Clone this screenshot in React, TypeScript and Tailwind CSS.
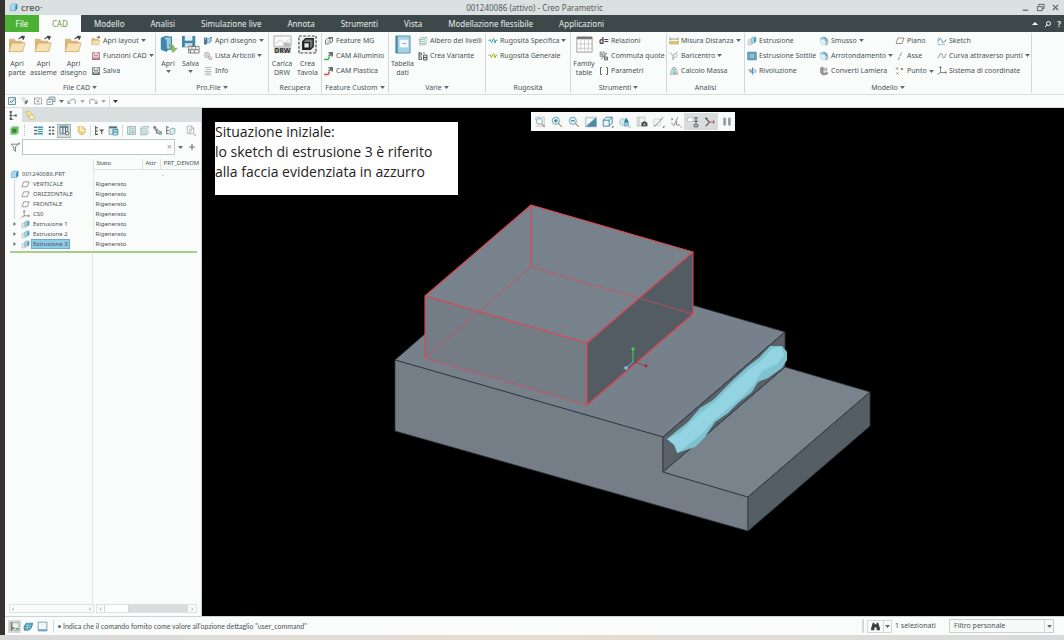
import type { ReactNode } from "react";
import clsx from "clsx";

type Item = { icon: string; label: string; menu?: boolean };
type Big = { icon: string; lines: string[]; menu?: boolean; width: string };
type Column = { width: string; items: Item[] };
type Group = {
  title: string;
  menu?: boolean;
  width: string;
  big?: Big[];
  columns?: Column[];
};

const folder = (
  <>
    <path d="M1 5V17.500H15L17 8H15V6H8L6.500 4H1Z" fill="#d9b77c" />
    <path d="M4 8.500H18L15.500 17.500H1Z" fill="#f6dfb0" stroke="#c9a566" strokeWidth=".7" />
    <path d="M11 4.500C12 2.500 13 2 15 2.500M14 1L17.500 1.500L16 5Z" fill="#333" stroke="#333" strokeWidth=".6" />
  </>
);

const disk = (color: string) => (
  <>
    <path d="M3 3H17V17H3Z" fill="#f4f6f7" stroke={color} strokeWidth="1.500" />
    <path d="M6 3V9H14V3M5 17V12H15V17" fill="#dfe3e5" stroke={color} strokeWidth="1.300" />
    <path d="M3 15H17V18H3Z" fill={color} />
  </>
);

const round = (
  <>
    <path d="M3 4L9 2C15 2 18 6 18 11V16L13 18V12C13 8 10 6 3 6Z" fill="#a9cbd8" stroke="#7aa7b8" />
    <path d="M3 6C10 6 13 8 13 12V18H7L3 14Z" fill="#e4f0f4" stroke="#a6bfc9" />
    <path d="M9 3C14 4 15 7 15 10" stroke="#3298c3" strokeWidth="2" fill="none" />
  </>
);

const icons: Record<string, ReactNode> = {
  folder,
  disk: disk("#59666e"),
  diskRed: disk("#b0606a"),
  openBlue: (
    <>
      <path d="M2 3L9 1V17L2 15Z" fill="#2f7396" />
      <path d="M5 2H13V15H8Z" fill="#9fcbe0" stroke="#2f6f92" />
      <path d="M2 3L8 5V18L2 15.500Z" fill="#3f87ac" />
      <path d="M11 10C14 9 16 11 16 14H19L15 18.500L11.500 14H14C14 12 13 11.500 11 12Z" fill="#8fc267" stroke="#5c8f3c" strokeWidth=".5" />
    </>
  ),
  saveBlue: (
    <>
      <path d="M1 1H15V13H1Z" fill="#4685a6" />
      <path d="M4 1H12V6H4Z" fill="#e9f3f7" />
      <path d="M4 8.500H12V13H4Z" fill="#c7dbe4" />
      <path d="M8 12H19V19H8ZM8 15.500H19M11.500 12V15.500M15.500 12V15.500M10 15.500V19M14 15.500V19" fill="#f6f6f6" stroke="#666" strokeWidth=".8" />
    </>
  ),
  book: (
    <>
      <path d="M2 3H8V17H2Z" fill="#4f7b93" />
      <path d="M4 4H6M4 7H6" stroke="#fff" />
      <path d="M9 5H14V14H9Z" fill="#b9dbe9" stroke="#52859d" />
      <path d="M16 2V12M14 4L16 2L18 4" stroke="#2f7396" strokeWidth="1.500" fill="none" />
    </>
  ),
  gearList: (
    <>
      <circle cx="8" cy="8" r="5" fill="#eee" stroke="#aaa" strokeWidth="2" />
      <circle cx="8" cy="8" r="1.500" fill="#999" />
      <path d="M11 12L14 10L17 13L18 17H12Z" fill="#ddd" stroke="#888" />
    </>
  ),
  lines: <path d="M3 3H17M5 7H16M3 11H17M5 14H16M3 17.500H17" stroke="#a6acaf" strokeWidth="1.600" />,
  drw: (
    <>
      <path d="M1 1H19V12H1Z" fill="#fafafa" stroke="#aaa" />
      <path d="M1 10L8 5L12 9L19 3" stroke="#ccc" fill="none" />
      <path d="M11 8H18V12H11Z" fill="#bbb" />
      <path d="M1 12H19V19H1Z" fill="#ccc" />
      <text x="10" y="18.500" fontSize="7" fontWeight="800" textAnchor="middle" fill="#333">DRW</text>
    </>
  ),
  tavola: (
    <>
      <path d="M1 1H19V19H1Z" fill="#eee" stroke="#444" strokeWidth="1.200" strokeDasharray="3 1.500" />
      <path d="M5 7L8 4H16V12L13 15H5Z" fill="#777" stroke="#222" strokeWidth="1.500" />
      <path d="M6 8H12V14H6Z" fill="#e8e8e8" stroke="#222" strokeWidth="1.500" />
    </>
  ),
  feature: (
    <>
      <path d="M3 8L7 5H12V13L9 16H3Z" fill="#fff" stroke="#555" strokeWidth="1.500" />
      <path d="M9 3H17V11L12 14M12 6L17 3M8 9V13" fill="none" stroke="#444" strokeWidth="1.500" />
    </>
  ),
  camGreen: (
    <>
      <path d="M9 2H18V11H15L14 8L12 11H9V7H12V5H9Z" fill="#667073" />
      <path d="M0 17H8L11 12" stroke="#3eb64c" strokeWidth="3" fill="none" />
    </>
  ),
  camRed: (
    <>
      <path d="M9 2H18V11H15L14 8L12 11H9V7H12V5H9Z" fill="#667073" />
      <path d="M0 17H8L11 12" stroke="#d84f5a" strokeWidth="3" fill="none" />
    </>
  ),
  tabella: (
    <>
      <path d="M3 1H18V19H3Z" fill="#a6d1e4" stroke="#6199b2" />
      <path d="M3 1H5V19H3Z" fill="#4b8aa9" />
      <path d="M7 5H16V13H7Z" fill="#f5fbfd" />
      <path d="M10 9H14" stroke="#76a9bf" />
    </>
  ),
  layers: (
    <path d="M2 7L6 3H18L14 7ZM2 11L6 8M2 11H14L18 7M2 15L6 12M2 15H14L18 11M2 18H14L18 14" fill="#e1f0ec" stroke="#7fa59d" strokeWidth="1.200" />
  ),
  variante: (
    <>
      <path d="M2 2V18M2 4H7V8H2M2 12H7V17H2M12 2V5" fill="none" stroke="#333" strokeWidth="1.500" />
      <path d="M11 8H18V18H11ZM11 13H18" fill="#ddd" stroke="#333" strokeWidth="1.500" />
    </>
  ),
  waveBlue: <path d="M1 10L4 7L7 13L11 5L14 14L16 8L19 9" stroke="#3da79d" strokeWidth="2" fill="none" />,
  waveGreen: <path d="M1 10L4 7L7 13L11 5L14 14L16 8L19 9" stroke="#a7b53b" strokeWidth="2" fill="none" />,
  family: (
    <>
      <path d="M2 2H18V18H2Z" fill="#fff" stroke="#999" />
      <path d="M2 2H18V4.500H2Z" fill="#777" />
      <path d="M2 9.500H18M2 14H18M6 5V18M10 5V18M14 5V18" stroke="#ccc" />
    </>
  ),
  deq: <text x="0" y="15" fontSize="16" fontWeight="700" fill="#444">d=</text>,
  quote: (
    <>
      <path d="M2 2H12V11H2Z" fill="#ccc" stroke="#777" />
      <path d="M4 17L16 4M3 5L8 9M11 12H17V18H11Z" stroke="#555" strokeWidth="1.500" fill="#bbb" />
    </>
  ),
  params: <path d="M6 3H3V17H6M14 3H17V17H14" fill="none" stroke="#666" strokeWidth="2" />,
  measure: (
    <>
      <path d="M2 3V9M18 3V9M2 6H18" stroke="#777" strokeWidth="1.500" />
      <path d="M1 11H19V16H1Z" fill="#e7cc62" stroke="#ab9440" />
    </>
  ),
  bari: (
    <>
      <path d="M2 3L8 9V18M8 9L17 2" stroke="#72878d" strokeWidth="1.600" fill="none" />
      <path d="M9 13Q17 13 16 6" stroke="#68a6a3" strokeWidth="1.500" fill="none" />
    </>
  ),
  mass: (
    <>
      <path d="M2 17L5 7H15L18 17Z" fill="#c3dfe2" stroke="#75a4ad" />
      <path d="M6 7L10 2L14 7M10 10V15L16 14" stroke="#65929b" strokeWidth="1.800" fill="none" />
      <path d="M12 12H17V17H12Z" fill="#efb980" />
    </>
  ),
  extrude: (
    <>
      <path d="M2 8L7 6H11V16L7 18H2Z" fill="#dce3e6" stroke="#a1b1b8" />
      <path d="M8 5L12 2H18V11L14 14H8Z" fill="#a8d2e4" stroke="#6d9fb5" />
      <path d="M14 5L18 2V11L14 14Z" fill="#4e9dc0" />
    </>
  ),
  extrudeThin: (
    <>
      <path d="M1 2H19V18H1Z" fill="#6fa7bf" stroke="#4f879f" />
      <path d="M5 5H15V15H5Z" fill="#b5d5e3" stroke="#396f89" />
      <path d="M8 8H12V12H8Z" fill="#e9f4f8" stroke="#396f89" />
    </>
  ),
  revolve: (
    <>
      <ellipse cx="12" cy="10" rx="7" ry="4" fill="#c3dbe5" stroke="#86a9b8" />
      <path d="M11 3V17M3 7L10 12" stroke="#5a8da2" strokeWidth="2" />
    </>
  ),
  round,
  sheet: (
    <>
      <path d="M3 4L8 2V12Q9 15 17 13V16Q8 20 5 16Q3 14 3 11Z" fill="#969da1" stroke="#62696d" />
      <path d="M9 4H16V10H9ZM9 7H16" fill="#e6e6e6" stroke="#888" />
    </>
  ),
  plane: <path d="M6 4H18L14 15H2Z" fill="#fbfaf6" stroke="#857c70" strokeWidth="1.600" />,
  axis: <path d="M6 18L14 2" stroke="#7d7468" strokeWidth="1.600" strokeDasharray="7 1.500" />,
  point: <path d="M2 3L6 7M6 3L2 7M12 4L16 8M16 4L12 8M3 13L7 17M7 13L3 17" stroke="#7d6e60" strokeWidth="1.600" />,
  sketch: (
    <>
      <path d="M2 4H7M2 4V17H16" stroke="#8db9cd" strokeWidth="1.500" fill="none" />
      <path d="M3 10C6 2 9 6 10 10S15 15 18 7" stroke="#3b93b8" strokeWidth="2" fill="none" />
    </>
  ),
  curve: <path d="M1 14C5 14 4 5 8 5S10 15 14 14S15 6 19 6" stroke="#777" strokeWidth="1.600" fill="none" />,
  csys: <path d="M7 2V13L1 17M7 13H18M5 4L7 1L9 4M16 11L19 13L16 15" fill="none" stroke="#6e665a" strokeWidth="1.600" />,
  part: (
    <>
      <path d="M3 6L7 2H18V13L14 17H3Z" fill="#a8d9ef" stroke="#3f94b7" />
      <path d="M14 6L18 2V13L14 17Z" fill="#278ab5" />
    </>
  ),
  check: (
    <>
      <path d="M3 3H17V17H3Z" fill="#e5f1f0" stroke="#53747c" strokeWidth="1.500" />
      <path d="M6 10L9 13L16 5" fill="none" stroke="#34828f" strokeWidth="2" />
    </>
  ),
  brush: (
    <>
      <path d="M3 3L10 5L14 12L7 10Z" fill="#eee" stroke="#aaa" />
      <path d="M10 10L17 8L14 15L9 17Z" fill="#777" />
    </>
  ),
  closeWin: <path d="M3 4H17V16H3ZM7 7L13 13M13 7L7 13" fill="#fff" stroke="#777" strokeWidth="1.600" strokeDasharray="3 1" />,
  windows: (
    <>
      <path d="M6 2H18V11H6Z" fill="#cfe0e4" stroke="#6b858c" strokeWidth="1.500" />
      <path d="M2 7H13V17H2Z" fill="#fff" stroke="#6b858c" strokeWidth="1.500" />
      <path d="M5 12H10" stroke="#3292a7" strokeWidth="2" />
    </>
  ),
  undo: <path d="M1 15H7M2 14V9M3 14Q8 4 14 6Q19 9 16 16" fill="none" stroke="#8f989c" strokeWidth="1.800" />,
  redo: <path d="M19 15H13M18 14V9M17 14Q12 4 6 6Q1 9 4 16" fill="none" stroke="#8f989c" strokeWidth="1.800" />,
  tree: (
    <>
      <path d="M5 3V17M5 10H12M5 17H10" stroke="#777" strokeWidth="1.500" />
      <path d="M3 2H7V6H3ZM3 8H7V12H3ZM3 14H7V18H3ZM12 8H16V12H12Z" fill="#555" />
    </>
  ),
  folders: (
    <>
      <path d="M2 3H9L13 8V12H5Z" fill="#f5e7a5" stroke="#c4a848" />
      <path d="M7 9H13L17 12V17H9Z" fill="#f9efbd" stroke="#c4a848" />
    </>
  ),
  greenCube: (
    <>
      <path d="M3 6L7 3H17V14L13 17H3Z" fill="#66b85e" stroke="#a9d5a5" strokeWidth="2" />
      <path d="M6 7H13V14H6Z" fill="#2e8a35" />
    </>
  ),
  listBlue: (
    <>
      <path d="M2 4H8M2 10H8M2 16H8" stroke="#5a6c74" strokeWidth="2.500" />
      <path d="M9 4H18M9 8H18M9 12H18M9 16H18" stroke="#3c9cae" strokeWidth="2.500" />
    </>
  ),
  listDots: <path d="M5 4H9M5 10H9M5 16H9M11 4H15M11 10H15M11 16H15" stroke="#5a6468" strokeWidth="3" />,
  columnsGear: (
    <>
      <path d="M2 2H16V16H2Z" fill="#e6f1f4" stroke="#456a77" strokeWidth="1.500" />
      <path d="M2 4H16M7 3V16M12 3V16" stroke="#456a77" strokeWidth="2" />
      <circle cx="15" cy="15" r="3" fill="#fff" stroke="#555" strokeWidth="1.500" />
    </>
  ),
  shield: (
    <>
      <path d="M4 3H12L17 7V12Q15 17 10 18Q5 16 4 12Z" fill="#f4d37b" stroke="#c79e3d" />
      <path d="M9 3V10H16" stroke="#fff" strokeWidth="2" fill="none" />
    </>
  ),
  treeFilter: (
    <>
      <path d="M3 2V18M3 5H7M3 11H7M3 17H7" stroke="#555" strokeWidth="2" />
      <path d="M9 8H19L15 12V17L13 16V12Z" fill="#555" />
    </>
  ),
  columns: (
    <>
      <path d="M2 3H16V17H2Z" fill="#dcebf0" stroke="#53717c" />
      <path d="M2 3H16V6H2Z" fill="#53717c" />
      <path d="M9 8H18V18H9ZM9 11H18M9 14H18" fill="#f6fafc" stroke="#2c83a0" strokeWidth="1.500" />
    </>
  ),
  pages: <path d="M3 3H17V17H3ZM7 3V17M9 7H15M9 11H15M9 14H15" fill="#eaf4f1" stroke="#6ca092" strokeWidth="1.300" />,
  treePencil: (
    <>
      <path d="M3 3H7V6H3ZM6 6V10H11M8 10V15H12" fill="#777" stroke="#777" strokeWidth="1.300" />
      <path d="M9 6L17 16M13 12H17V17H13Z" fill="#e8efe7" stroke="#58908a" strokeWidth="1.500" />
    </>
  ),
  treeBox: (
    <>
      <path d="M3 2V17M3 4H7M3 10H7M3 16H7" stroke="#777" strokeWidth="2" />
      <path d="M9 8L12 6H18V14L15 17H9Z" fill="#ddeef0" stroke="#6e9ea1" strokeWidth="1.300" />
    </>
  ),
  doc: <path d="M4 2H12L16 6V16H4ZM12 2V6H16M7 8H13M7 11H13M7 14H11M17 19H19V17Z" fill="#fafafa" stroke="#999" strokeWidth="1.200" />,
  funnel: <path d="M2 4H14L10 9V17L7 15V9ZM14 3H18M16 1V5" fill="#fff" stroke="#777" strokeWidth="1.600" />,
  zoomFit: (
    <>
      <path d="M3 7V2H17V17H3" fill="none" stroke="#adb5b7" strokeWidth="1.300" />
      <circle cx="9" cy="9" r="5" fill="#eff8fa" stroke="#8299a0" strokeWidth="1.500" />
      <path d="M13 13L18 18" stroke="#a7926f" strokeWidth="2" />
    </>
  ),
  zoomIn: (
    <>
      <circle cx="8" cy="8" r="6" fill="#e3f3f8" stroke="#6598a8" strokeWidth="1.500" />
      <path d="M5 8H11M8 5V11" stroke="#227e9e" strokeWidth="2" />
      <path d="M12 12L18 18" stroke="#a7926f" strokeWidth="2" />
    </>
  ),
  zoomOut: (
    <>
      <circle cx="8" cy="8" r="6" fill="#e3f3f8" stroke="#6598a8" strokeWidth="1.500" />
      <path d="M5 8H11" stroke="#227e9e" strokeWidth="2" />
      <path d="M12 12L18 18" stroke="#a7926f" strokeWidth="2" />
    </>
  ),
  refit: (
    <>
      <path d="M1 2H19V18H1Z" fill="#dbe9ee" stroke="#93adb5" />
      <path d="M1 18L19 2V18Z" fill="#4f8aa5" />
      <path d="M4 5H12L4 13Z" fill="#fff" />
    </>
  ),
  cubeView: (
    <>
      <path d="M2 7L7 2H17V12L12 17H2Z" fill="#e9f7fb" stroke="#397e97" strokeWidth="1.500" />
      <path d="M2 7H12V17M12 7L17 2" stroke="#397e97" strokeWidth="1.500" fill="none" />
      <path d="M16 19H19V16Z" fill="#333" />
    </>
  ),
  appearance: (
    <>
      <circle cx="7" cy="10" r="6" fill="#cfe7f0" stroke="#8caebb" />
      <path d="M12 3L17 11H8Z" fill="#28809f" />
      <path d="M9 12H16V17H9Z" fill="#98cbdb" stroke="#67a0b4" />
      <path d="M17 19H19V17Z" fill="#333" />
    </>
  ),
  camera: (
    <>
      <path d="M2 2H15V17H2ZM5 2V17" fill="#f1f1f1" stroke="#b2b8ba" strokeWidth="1.300" />
      <path d="M9 11H11L12 9H16L17 11H19V17H9Z" fill="#444" />
      <circle cx="14" cy="14" r="1.800" fill="#bbb" />
    </>
  ),
  datum: (
    <>
      <path d="M2 5H14L11 16H1Z" fill="none" stroke="#b1b7b9" />
      <path d="M2 18L17 2" stroke="#5e8c9b" strokeWidth="1.500" />
      <path d="M16 19H19V16Z" fill="#333" />
    </>
  ),
  datumTags: (
    <>
      <path d="M6 17L13 2M2 4L5 7M5 4L2 7M2 11L6 15M11 9V15H17" fill="none" stroke="#8a8178" strokeWidth="1.500" />
      <path d="M17 19H19V17Z" fill="#333" />
    </>
  ),
  annot: (
    <>
      <path d="M1 3H10V9H1Z" fill="#fff" stroke="#aaa" />
      <path d="M12 3H18M12 9H18M15 3V12M12 14H18V18H12Z" fill="none" stroke="#555" strokeWidth="1.600" />
    </>
  ),
  spin: (
    <>
      <path d="M2 3L9 10L3 17M2 3L6 5M3 17L6 14" stroke="#555" strokeWidth="1.800" fill="none" />
      <path d="M9 10H18M16 7V13" stroke="#bb5d58" strokeWidth="1.800" fill="none" />
    </>
  ),
  pause: <path d="M4 3H8V16H4ZM12 3H16V16H12Z" fill="#8c9396" />,
  navTree: (
    <>
      <path d="M2 3H18V17H2Z" fill="#e9efec" stroke="#76807c" />
      <path d="M5 3V17M5 13H10M12 14H17" stroke="#555" strokeWidth="2" />
    </>
  ),
  browser: (
    <>
      <path d="M2 9L6 4H18L15 13L10 17H2Z" fill="#4aa0bb" stroke="#2c6f8b" />
      <path d="M5 8H15M4 12H14M10 4L7 17" stroke="#c7e6ef" />
    </>
  ),
  screen: (
    <>
      <path d="M2 2H18V18H2Z" fill="#eff7f9" stroke="#62818c" strokeWidth="1.300" />
      <path d="M2 15H18V18H2Z" fill="#68a5b8" />
    </>
  ),
  binoculars: (
    <path d="M5 3H8V6H12V3H15L18 13V17H12V12H8V17H2V13Z" fill="#3b3f41" />
  ),
};

function Icon({ name, className = "size-[11px]" }: { name: string; className?: string }) {
  return (
    <svg viewBox="0 0 20 20" className={clsx("shrink-0", className)} aria-hidden="true">
      {icons[name]}
    </svg>
  );
}

function Caret({ className = "text-[#666]" }: { className?: string }) {
  return (
    <svg viewBox="0 0 8 5" className={clsx("h-[3px] w-[5px] shrink-0", className)} aria-hidden="true">
      <path d="M0 0H8L4 5Z" fill="currentColor" />
    </svg>
  );
}

const menuTabs = [
  "Modello",
  "Analisi",
  "Simulazione live",
  "Annota",
  "Strumenti",
  "Vista",
  "Modellazione flessibile",
  "Applicazioni",
];

const groups: Group[] = [
  {
    title: "File CAD",
    menu: true,
    width: "w-[151px]",
    big: [
      { icon: "folder", lines: ["Apri", "parte"], width: "w-[24px]" },
      { icon: "folder", lines: ["Apri", "assieme"], width: "w-[29px]" },
      { icon: "folder", lines: ["Apri", "disegno"], width: "w-[31px]" },
    ],
    columns: [
      {
        width: "w-[65px]",
        items: [
          { icon: "folder", label: "Apri layout", menu: true },
          { icon: "diskRed", label: "Funzioni CAD", menu: true },
          { icon: "disk", label: "Salva" },
        ],
      },
    ],
  },
  {
    title: "Pro.File",
    menu: true,
    width: "w-[113px]",
    big: [
      { icon: "openBlue", lines: ["Apri"], menu: true, width: "w-[24px]" },
      { icon: "saveBlue", lines: ["Salva"], menu: true, width: "w-[21px]" },
    ],
    columns: [
      {
        width: "w-[65px]",
        items: [
          { icon: "book", label: "Apri disegno", menu: true },
          { icon: "gearList", label: "Lista Articoli", menu: true },
          { icon: "lines", label: "Info" },
        ],
      },
    ],
  },
  {
    title: "Recupera",
    width: "w-[53px]",
    big: [
      { icon: "drw", lines: ["Carica", "DRW"], width: "w-[26px]" },
      { icon: "tavola", lines: ["Crea", "Tavola"], width: "w-[25px]" },
    ],
  },
  {
    title: "Feature Custom",
    menu: true,
    width: "w-[67px]",
    columns: [
      {
        width: "w-[63px]",
        items: [
          { icon: "feature", label: "Feature MG" },
          { icon: "camGreen", label: "CAM Alluminio" },
          { icon: "camRed", label: "CAM Plastica" },
        ],
      },
    ],
  },
  {
    title: "Varie",
    menu: true,
    width: "w-[97px]",
    big: [{ icon: "tabella", lines: ["Tabella", "dati"], width: "w-[27px]" }],
    columns: [
      {
        width: "w-[67px]",
        items: [
          { icon: "layers", label: "Albero dei livelli" },
          { icon: "variante", label: "Crea Variante" },
        ],
      },
    ],
  },
  {
    title: "Rugosità",
    width: "w-[85px]",
    columns: [
      {
        width: "w-[82px]",
        items: [
          { icon: "waveBlue", label: "Rugosità Specifica", menu: true },
          { icon: "waveGreen", label: "Rugosità Generale" },
        ],
      },
    ],
  },
  {
    title: "Strumenti",
    menu: true,
    width: "w-[96px]",
    big: [{ icon: "family", lines: ["Family", "table"], width: "w-[26px]" }],
    columns: [
      {
        width: "w-[67px]",
        items: [
          { icon: "deq", label: "Relazioni" },
          { icon: "quote", label: "Commuta quote" },
          { icon: "params", label: "Parametri" },
        ],
      },
    ],
  },
  {
    title: "Analisi",
    width: "w-[78px]",
    columns: [
      {
        width: "w-[75px]",
        items: [
          { icon: "measure", label: "Misura Distanza", menu: true },
          { icon: "bari", label: "Baricentro", menu: true },
          { icon: "mass", label: "Calcolo Massa" },
        ],
      },
    ],
  },
  {
    title: "Modello",
    menu: true,
    width: "w-[287px]",
    columns: [
      {
        width: "w-[70px]",
        items: [
          { icon: "extrude", label: "Estrusione" },
          { icon: "extrudeThin", label: "Estrusione Sottile" },
          { icon: "revolve", label: "Rivoluzione" },
        ],
      },
      {
        width: "w-[74px]",
        items: [
          { icon: "round", label: "Smusso", menu: true },
          { icon: "round", label: "Arrotondamento", menu: true },
          { icon: "sheet", label: "Converti Lamiera" },
        ],
      },
      {
        width: "w-[40px]",
        items: [
          { icon: "plane", label: "Piano" },
          { icon: "axis", label: "Asse" },
          { icon: "point", label: "Punto", menu: true },
        ],
      },
      {
        width: "w-[94px]",
        items: [
          { icon: "sketch", label: "Sketch" },
          { icon: "curve", label: "Curva attraverso punti", menu: true },
          { icon: "csys", label: "Sistema di coordinate" },
        ],
      },
    ],
  },
];

const treeRows = [
  { icon: "plane", label: "VERTICALE" },
  { icon: "plane", label: "ORIZZONTALE" },
  { icon: "plane", label: "FRONTALE" },
  { icon: "csys", label: "CS0" },
  { icon: "extrude", label: "Estrusione 1", expandable: true },
  { icon: "extrude", label: "Estrusione 2", expandable: true },
  { icon: "extrude", label: "Estrusione 3", expandable: true, selected: true },
];

const viewTools = [
  { icon: "zoomFit", label: "Adatta" },
  { icon: "zoomIn", label: "Zoom avanti" },
  { icon: "zoomOut", label: "Zoom indietro" },
  { icon: "refit", label: "Ridisegna" },
  { icon: "cubeView", label: "Stile di visualizzazione" },
  { icon: "appearance", label: "Aspetto" },
  { icon: "camera", label: "Viste salvate" },
  { icon: "datum", label: "Riferimenti" },
  { icon: "datumTags", label: "Etichette riferimenti" },
  { icon: "annot", label: "Annotazioni", active: true },
  { icon: "spin", label: "Centro di rotazione", active: true },
  { icon: "pause", label: "Pausa" },
];

function TitleBar() {
  return (
    <header className="grid h-[15px] shrink-0 grid-cols-3 items-center bg-[#dbe1e0] px-1 text-[8px] text-[#555b5c]">
      <div className="flex items-center gap-[3px]">
        <Icon name="part" className="size-[9px]" />
        <span className="font-['Open_Sans',sans-serif] text-[9px] font-semibold leading-[14px]">creo·</span>
      </div>
      <h1 className="whitespace-nowrap text-center">001240086 (attivo) - Creo Parametric</h1>
      <div className="flex justify-end gap-[6px]">
        <button aria-label="Riduci">
          <svg viewBox="0 0 10 10" className="size-[9px]"><path d="M2 8H8" stroke="#555" strokeWidth="1.200" /></svg>
        </button>
        <button aria-label="Ripristina">
          <svg viewBox="0 0 10 10" className="size-[9px]">
            <path d="M3 3V1.500H9V6H7M1.500 4H7V8.500H1.500Z" fill="none" stroke="#555" />
          </svg>
        </button>
        <button aria-label="Chiudi">
          <svg viewBox="0 0 10 10" className="size-[9px]"><path d="M2 2L8 8M8 2L2 8" stroke="#555" strokeWidth="1.200" /></svg>
        </button>
      </div>
    </header>
  );
}

function MenuTabs() {
  return (
    <nav className="flex h-[17px] shrink-0 items-stretch bg-[#3d484a] text-[8px] text-[#e8ecec]">
      <button className="w-[34px] bg-[#4bb135] text-white">File</button>
      <button className="w-[42px] bg-[#fafcfc] text-[#6b9a47]">CAD</button>
      {menuTabs.map((tab) => (
        <button key={tab} className="whitespace-nowrap px-[13px]">
          {tab}
        </button>
      ))}
      <div className="ml-auto flex items-center gap-[5px] pr-[3px]">
        <button aria-label="Comprimi barra">
          <svg viewBox="0 0 8 8" className="size-2"><path d="M1 5L4 2L7 5Z" fill="#fff" /></svg>
        </button>
        <button aria-label="Cerca">
          <svg viewBox="0 0 8 8" className="size-2">
            <circle cx="4.500" cy="3.500" r="2" fill="none" stroke="#fff" />
            <path d="M3 5L1 7" stroke="#fff" />
          </svg>
        </button>
        <button className="font-bold">?</button>
      </div>
    </nav>
  );
}

function RibbonGroup({ group }: { group: Group }) {
  return (
    <section className={clsx("flex h-[60px] shrink-0 flex-col border-r border-[#d3d8d9]", group.width)}>
      <div className="flex h-[49px]">
        {group.big?.map((b, i) => (
          <button key={i} className={clsx("flex shrink-0 flex-col items-center pt-[2px]", b.width)}>
            <Icon name={b.icon} className="size-[19px]" />
            <span className="mt-[5px] flex flex-col items-center leading-[9px]">
              {b.lines.map((line) => (
                <span key={line}>{line}</span>
              ))}
            </span>
            {b.menu && <Caret className="mt-[2px] text-[#666]" />}
          </button>
        ))}
        {group.columns?.map((col, i) => (
          <div key={i} className={clsx("ml-[2px] grid h-[46px] shrink-0 grid-rows-3", col.width)}>
            {col.items.map((item) => (
              <button key={item.label} className="flex items-center gap-[2px] whitespace-nowrap">
                <Icon name={item.icon} className="size-[10px]" />
                {item.label}
                {item.menu && <Caret />}
              </button>
            ))}
          </div>
        ))}
      </div>
      <button className="flex items-center justify-center gap-[2px] whitespace-nowrap leading-[11px]">
        {group.title}
        {group.menu && <Caret />}
      </button>
    </section>
  );
}

function QuickBar() {
  return (
    <div className="flex h-[13px] shrink-0 items-center gap-[3px] border-t border-[#d8dddd] bg-[#fafcfc] pl-[2px]">
      {["check", "brush", "closeWin", "windows"].map((name) => (
        <button key={name} aria-label={name}>
          <Icon name={name} className="size-[10px]" />
        </button>
      ))}
      <Caret />
      <button aria-label="Annulla"><Icon name="undo" className="size-[10px]" /></button>
      <Caret className="text-[#aaa]" />
      <button aria-label="Ripeti"><Icon name="redo" className="size-[10px]" /></button>
      <Caret className="text-[#aaa]" />
      <span className="h-[11px] border-r border-[#d8dddd]" />
      <Caret className="text-[#333]" />
    </div>
  );
}

function TreeToolbar() {
  return (
    <div className="flex h-[17px] shrink-0 items-center pl-[4px]">
      <button aria-label="Modello"><Icon name="greenCube" /></button>
      <span className="ml-[4px] mr-[8px] h-[11px] border-r border-dotted border-[#bbb]" />
      <button aria-label="Espandi"><Icon name="listBlue" /></button>
      <button aria-label="Comprimi" className="ml-[2px]"><Icon name="listDots" /></button>
      <button aria-label="Colonne" className="flex size-[14px] items-center justify-center border border-[#aab4b6] bg-[#d5dedf]">
        <Icon name="columnsGear" />
      </button>
      <button aria-label="Protezione" className="ml-[5px]"><Icon name="shield" /></button>
      <span className="mx-[3px] h-[12px] border-r border-[#d3d8d9]" />
      <button aria-label="Filtri"><Icon name="treeFilter" /></button>
      <button aria-label="Imposta colonne" className="ml-[3px]"><Icon name="columns" /></button>
      <span className="mx-[3px] h-[12px] border-r border-[#d3d8d9]" />
      <button aria-label="Pagine"><Icon name="pages" /></button>
      <button aria-label="Livelli" className="ml-[2px]"><Icon name="layers" /></button>
      <button aria-label="Modifica" className="ml-[2px]"><Icon name="treePencil" /></button>
      <button aria-label="Selezione" className="ml-[2px]"><Icon name="treeBox" /></button>
      <button aria-label="Documento" className="ml-[9px]"><Icon name="doc" /></button>
    </div>
  );
}

function ModelTree() {
  return (
    <aside className="flex w-[197px] shrink-0 flex-col border-r border-[#c9cfd0] bg-[#fafcfc]">
      <div className="flex h-[14px] shrink-0 bg-[#d9dfdf]">
        <button aria-label="Albero del modello" className="flex w-[17px] items-center justify-center bg-[#fafcfc]">
          <Icon name="tree" />
        </button>
        <button aria-label="Cartelle" className="ml-[3px]"><Icon name="folders" /></button>
      </div>
      <TreeToolbar />
      <div className="flex h-[16px] shrink-0 items-center pl-[5px]">
        <Icon name="funnel" />
        <label className="ml-px flex h-[16px] w-[153px] items-center border border-[#c0c7c9] bg-white">
          <input aria-label="Filtro albero" className="w-full min-w-0 flex-1 px-1 outline-none" />
          <span className="pr-[2px] text-[9px] text-[#999]">×</span>
        </label>
        <Caret className="ml-[3px] text-[#666]" />
        <button aria-label="Aggiungi" className="ml-[5px]">
          <svg viewBox="0 0 8 8" className="size-[8px]"><path d="M4 1V7M1 4H7" stroke="#777" strokeWidth="1.200" /></svg>
        </button>
      </div>
      <table className="mt-[4px] w-[196px] table-fixed border-collapse text-left text-[6px] leading-[9px]">
        <thead>
          <tr className="h-[10px]">
            <th className="w-[88px] border-r border-[#dce1e2]" />
            <th className="w-[49px] border-b border-r border-[#dce1e2] pl-[3px] font-normal">Stato</th>
            <th className="w-[18px] border-b border-r border-[#dce1e2] pl-[3px] font-normal">Attr</th>
            <th className="whitespace-nowrap border-b border-[#dce1e2] pl-[3px] font-normal">PRT_DENOM</th>
          </tr>
        </thead>
        <tbody>
          <tr className="h-[10px]">
            <td className="border-r border-[#e4e8e9] pl-[5px]">
              <span className="flex h-[10px] items-center gap-[3px]">
                <Icon name="part" className="size-[9px]" />
                001240086.PRT
              </span>
            </td>
            <td />
            <td />
            <td className="pl-[2px]">.</td>
          </tr>
          {treeRows.map((row) => (
            <tr key={row.label} className="h-[10px]">
              <td className="border-r border-[#e4e8e9] pl-[7px]">
                <span className="flex h-[10px] items-center">
                  <svg viewBox="0 0 6 10" className="h-[10px] w-[6px]" aria-hidden="true">
                    {row.expandable ? (
                      <path d="M1.500 3L4 5L1.500 7Z" fill="#666" />
                    ) : (
                      <path d="M2.500 0V10" stroke="#d5d9da" />
                    )}
                  </svg>
                  <Icon name={row.icon} className="ml-[3px] size-[9px]" />
                  <span className={clsx("ml-[2px] px-px leading-[8px]", row.selected && "bg-[#8ecbe6] ring-1 ring-[#6badc8]")}>
                    {row.label}
                  </span>
                </span>
              </td>
              <td className="pl-[2px]">Rigenerato</td>
              <td />
              <td />
            </tr>
          ))}
        </tbody>
      </table>
      <div className="ml-[5px] mr-[4px] mt-[2px] h-[2px] shrink-0 bg-[#a5cf86]" />
      <div className="w-[88px] flex-1 border-r border-[#e4e8e9]" />
      <div className="mb-[3px] flex h-[9px] shrink-0 gap-[2px] pl-[4px] pr-[4px] text-[7px] leading-[7px] text-[#888]">
        <div className="flex w-[85px] justify-between border border-[#dde1e2] px-[2px]">
          <span>‹</span>
          <span>›</span>
        </div>
        <div className="flex flex-1 border border-[#dde1e2]">
          <span className="w-[7px] text-center">‹</span>
          <span className="w-[25px] border-x border-[#cfd4d5] bg-white" />
          <span className="flex-1 bg-[#d9dddd]" />
          <span className="w-[8px] text-center">›</span>
        </div>
      </div>
    </aside>
  );
}

function Part() {
  return (
    <svg
      viewBox="202 108 862 508"
      preserveAspectRatio="xMinYMin meet"
      className="block h-full w-full"
      role="img"
      aria-label="Modello 3D"
    >
      <g stroke="#2f363c" strokeWidth=".8" strokeLinejoin="round">
        <path d="M395 360L517 254L785 332L663 437Z" fill="#77818b" />
        <path d="M395 360L663 437V472L748 497V531L395 431Z" fill="#757e87" />
        <path d="M663 472L785 367L870 392L748 497Z" fill="#79838c" />
        <path d="M748 497L870 392V426L748 531Z" fill="#565e65" />
        <path d="M663 437L785 332V367L663 472Z" fill="#596067" />
      </g>
      <path
        d="M667 439L678 430L688 422L700 408L713 400L733 380L747 367L760 357L770 346L782 346L787 352L787 360L782 368L768 378L758 382L752 392L738 403L728 413L715 422L705 437L695 447L677 453L674 445Z"
        fill="#7fc2d0"
      />
      <path
        d="M667 439L680 433L692 421L703 411L716 401L734 383L750 369L763 359L772 348L782 347L784 356L777 364L762 371L754 384L745 394L730 407L714 420L704 432L694 440L678 453L675 445Z"
        fill="#92d4e1"
      />
      <path d="M425 296L531 205L693 252L587 343Z" fill="#78828c" />
      <path d="M425 296L587 343V405L425 358Z" fill="#747d86" />
      <path d="M587 343L693 252V314L587 405Z" fill="#545c63" />
      <g fill="none" stroke="#e04452" strokeWidth="1.100" strokeLinejoin="round">
        <path d="M425 296L531 205L693 252L587 343Z" />
        <path d="M425 296V358M587 343V405M693 252V314M531 205V267M587 405L693 314" />
        <path d="M425 358L531 267L693 314M425 358L587 405" strokeDasharray="4 1" strokeWidth=".9" />
      </g>
      <path d="M633 362V350" stroke="#45c34d" strokeWidth="1.200" />
      <circle cx="633" cy="349" r="1.700" fill="#39d643" />
      <path d="M633 362L626 368" stroke="#69b4e6" />
      <circle cx="626" cy="368" r="1.800" fill="#80c3ef" />
      <path d="M635 362L646 366" stroke="#a83943" />
      <circle cx="646" cy="366" r="1.400" fill="#8e303a" />
    </svg>
  );
}

function Viewport() {
  return (
    <main className="relative min-w-0 flex-1 overflow-hidden bg-black">
      <Part />
      <p className="absolute left-[13px] top-[14px] h-[73px] w-[243px] bg-white font-['Open_Sans',sans-serif] text-[14px] leading-[20px] text-[#222]">
        Situazione iniziale:
        <br />
        lo sketch di estrusione 3 è riferito
        <br />
        alla faccia evidenziata in azzurro
      </p>
      <div className="absolute left-[329px] top-[4px] flex h-[19px] items-center bg-[#f8fafa]">
        {viewTools.map((tool) => (
          <button
            key={tool.icon}
            aria-label={tool.label}
            className={clsx("flex h-[17px] w-[17px] items-center justify-center", tool.active && "bg-[#d8dcdc]")}
          >
            <Icon name={tool.icon} className="size-[12px]" />
          </button>
        ))}
      </div>
    </main>
  );
}

function StatusBar() {
  return (
    <footer className="flex h-[19px] shrink-0 items-center border-t border-[#cfd5d6] bg-[#fafcfc] pl-[3px] pr-[10px]">
      <button aria-label="Navigatore" className="flex size-[13px] items-center justify-center bg-[#d5dbd9]">
        <Icon name="navTree" />
      </button>
      <button aria-label="Browser" className="ml-[2px]"><Icon name="browser" /></button>
      <button aria-label="Schermo intero" className="ml-[3px]"><Icon name="screen" /></button>
      <span className="ml-[5px] mr-[4px] h-[13px] border-r border-[#d3d8d9]" />
      <span className="size-[3px] rounded-full bg-[#4b6c88]" />
      <p className="ml-[2px] whitespace-nowrap font-['Lato',sans-serif]">
        Indica che il comando fornito come valore all'opzione dettaglio "user_command"
      </p>
      <span className="ml-auto mr-[3px] h-[14px] w-[2px] border-x border-[#d3d8d9]" />
      <button aria-label="Trova" className="flex h-[13px] w-[25px] items-center border border-[#d3d8d9]">
        <span className="flex w-[16px] justify-center border-r border-[#d3d8d9]">
          <Icon name="binoculars" />
        </span>
        <Caret className="ml-px text-[#666]" />
      </button>
      <span className="ml-[3px] w-[54px] whitespace-nowrap">1 selezionati</span>
      <label className="flex h-[14px] w-[105px] items-center border border-[#c9cfd0] bg-[#f8faf9]">
        <select aria-label="Filtro di selezione" className="h-full flex-1 appearance-none pl-[4px] outline-none">
          <option>Filtro personale</option>
        </select>
        <span className="flex h-full w-[9px] items-center justify-center border-l border-[#d3d8d9]">
          <Caret />
        </span>
      </label>
    </footer>
  );
}

export default function App() {
  return (
    <div className="flex h-screen flex-col overflow-hidden bg-[#e2e0da] font-['Noto_Sans',sans-serif] text-[7px] leading-[10px] text-[#4c5254]">
      <div className="flex min-h-0 flex-1 bg-[#39332f] pl-[5px]">
        <div className="flex min-w-0 flex-1 flex-col">
          <TitleBar />
          <MenuTabs />
          <div className="flex h-[62px] shrink-0 bg-[#fafcfc] pt-px">
            {groups.map((group) => (
              <RibbonGroup key={group.title} group={group} />
            ))}
          </div>
          <QuickBar />
          <div className="flex min-h-0 flex-1 border-t border-[#d8dddd]">
            <ModelTree />
            <Viewport />
          </div>
          <StatusBar />
        </div>
      </div>
      <div className="h-[5px] shrink-0 bg-linear-to-r from-[#d9dadc] via-[#e5ddd0] to-[#d7dadb]" />
    </div>
  );
}
